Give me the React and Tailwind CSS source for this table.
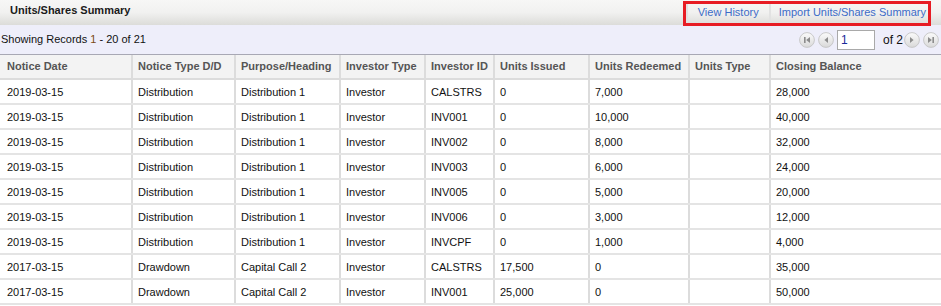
import React from "react";

const cols = [
  { label: "Notice Date", w: "w-[133px]" },
  { label: "Notice Type D/D", w: "w-[103px]" },
  { label: "Purpose/Heading", w: "w-[105px]" },
  { label: "Investor Type", w: "w-[85px]" },
  { label: "Investor ID", w: "w-[69px]" },
  { label: "Units Issued", w: "w-[95px]" },
  { label: "Units Redeemed", w: "w-[100px]" },
  { label: "Units Type", w: "w-[81px]" },
  { label: "Closing Balance", w: "flex-1" },
];

const rows = [
  ["2019-03-15", "Distribution", "Distribution 1", "Investor", "CALSTRS", "0", "7,000", "", "28,000"],
  ["2019-03-15", "Distribution", "Distribution 1", "Investor", "INV001", "0", "10,000", "", "40,000"],
  ["2019-03-15", "Distribution", "Distribution 1", "Investor", "INV002", "0", "8,000", "", "32,000"],
  ["2019-03-15", "Distribution", "Distribution 1", "Investor", "INV003", "0", "6,000", "", "24,000"],
  ["2019-03-15", "Distribution", "Distribution 1", "Investor", "INV005", "0", "5,000", "", "20,000"],
  ["2019-03-15", "Distribution", "Distribution 1", "Investor", "INV006", "0", "3,000", "", "12,000"],
  ["2019-03-15", "Distribution", "Distribution 1", "Investor", "INVCPF", "0", "1,000", "", "4,000"],
  ["2017-03-15", "Drawdown", "Capital Call 2", "Investor", "CALSTRS", "17,500", "0", "", "35,000"],
  ["2017-03-15", "Drawdown", "Capital Call 2", "Investor", "INV001", "25,000", "0", "", "50,000"],
];

function PagerBtn({ kind }) {
  return (
    <svg width="16" height="16" viewBox="0 0 16 16" className="shrink-0">
      <defs>
        <linearGradient id={"g" + kind} x1="0" y1="0" x2="0" y2="1">
          <stop offset="0" stopColor="#fbfbfb" />
          <stop offset="1" stopColor="#d9d9d9" />
        </linearGradient>
      </defs>
      <circle cx="8" cy="8" r="7.4" fill={"url(#g" + kind + ")"} stroke="#c4c4c4" strokeWidth="0.9" />
      {kind === "first" && (
        <>
          <rect x="5" y="5" width="1.6" height="6" fill="#8c8c8c" />
          <path d="M11 5 L7.2 8 L11 11 Z" fill="#8c8c8c" />
        </>
      )}
      {kind === "prev" && <path d="M10 5 L6.4 8 L10 11 Z" fill="#8c8c8c" />}
      {kind === "next" && <path d="M6 5 L9.6 8 L6 11 Z" fill="#8c8c8c" />}
      {kind === "last" && (
        <>
          <path d="M5 5 L8.8 8 L5 11 Z" fill="#8c8c8c" />
          <rect x="9.4" y="5" width="1.6" height="6" fill="#8c8c8c" />
        </>
      )}
    </svg>
  );
}

export default function App() {
  return (
    <div className="w-[941px] h-[306px] overflow-hidden bg-white text-[11px] font-['Liberation_Sans',Arial,sans-serif] text-[#111]">
      {/* title bar */}
      <div className="h-[25px] flex items-stretch bg-gradient-to-b from-[#f7f7f6] via-[#f1f1f0] to-[#dcdcd9] shadow-[0_1px_1px_rgba(0,0,0,0.12)]">
        <div className="flex items-center pl-[10px] pb-[4px] font-bold text-[#1a1a1a]">Units/Shares Summary</div>
        <div className="ml-auto mr-[10px] mt-[1px] h-[25px] border-[3px] border-[#e71c24] flex items-stretch">
          <div className="flex items-center border-l-2 border-[#e2e2e2] pl-[10px] pr-[10px] pb-[3px] text-[#3c6cc8]">View History</div>
          <div className="flex items-center border-l-2 border-[#e2e2e2] pl-[8px] pr-[2px] pb-[3px] text-[#3c6cc8]">Import Units/Shares Summary</div>
        </div>
      </div>
      {/* toolbar */}
      <div className="h-[30px] flex items-center bg-[#eeeefa] border-b border-[#a8a8b4]">
        <span className="pl-[1px] pb-[1px] text-[#111]">Showing Records <span className="text-[#7a4a14]">1</span> - 20 of 21</span>
        <div className="ml-auto flex items-center pr-[2px]">
          <PagerBtn kind="first" />
          <div className="w-[3px]" />
          <PagerBtn kind="prev" />
          <div className="w-[3px]" />
          <div className="w-[38px] h-[20px] border border-[#a9a9a9] bg-white text-[#1a2a9a] pl-[3px] leading-[18px] text-[12px]">1</div>
          <span className="ml-[8px] mr-[1px] text-[#111] text-[12px]">of 2</span>
          <PagerBtn kind="next" />
          <div className="w-[3px]" />
          <PagerBtn kind="last" />
        </div>
      </div>
      {/* table header */}
      <div className="flex h-[25px] bg-[#f3f3f3] border-b-2 border-[#dcdcdc]">
        {cols.map((c, i) => (
          <div
            key={i}
            className={`${c.w} shrink-0 flex items-center font-bold text-[#555] ${i === 0 ? "pl-[7px]" : "pl-[5px]"} ${i < cols.length - 1 ? "border-r-2 border-[#dcdcdc]" : ""}`}
          >
            {c.label}
          </div>
        ))}
      </div>
      {rows.map((r, ri) => (
        <div key={ri} className="flex h-[25px] border-b-2 border-[#e4e4e4]">
          {r.map((v, i) => (
            <div
              key={i}
              className={`${cols[i].w} shrink-0 flex items-center pt-[2px] ${i === 0 ? "pl-[7px]" : "pl-[5px]"} ${i < cols.length - 1 ? "border-r-2 border-[#dcdcdc]" : ""}`}
            >
              {v}
            </div>
          ))}
        </div>
      ))}
    </div>
  );
}
